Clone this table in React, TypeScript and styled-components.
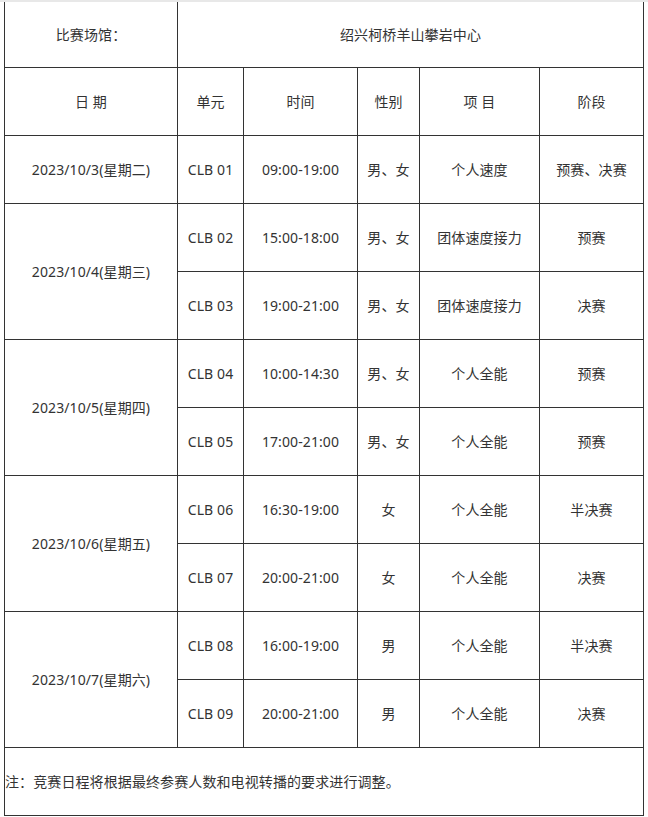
import React from "react";
import styled, { createGlobalStyle } from "styled-components";

const GlobalStyle = createGlobalStyle`
  html, body { margin: 0; padding: 0; background: #fff; }
  body { font-family: "Noto Sans", "Noto Sans CJK SC", sans-serif; color: #333; }
`;

const Page = styled.div`
  padding: 0 4px;
`;

const TopRule = styled.div`
  height: 2px;
  margin: 0 -4px;
  background: #e8e8e8;
`;

const Table = styled.table`
  width: 639px;
  table-layout: fixed;
  border-collapse: collapse;
  font-size: 14px;
  font-family: "Noto Sans", "Noto Sans CJK SC", sans-serif;
  color: #333;
`;

const Row = styled.tr<{ $h: number }>`
  height: ${(p) => p.$h}px;
`;

const Cell = styled.td<{ $align?: string; $noTop?: boolean }>`
  border: 1px solid #333;
  ${(p) => (p.$noTop ? "border-top: none;" : "")}
  padding: 1px 0 0;
  text-align: ${(p) => p.$align || "center"};
  vertical-align: middle;
  white-space: nowrap;
  line-height: 20px;
  letter-spacing: 0.1px;
`;

type Item = { unit: string; time: string; sex: string; event: string; stage: string };
type Day = { date: string; items: Item[] };

const days: Day[] = [
  { date: "2023/10/3(星期二)", items: [{ unit: "CLB 01", time: "09:00-19:00", sex: "男、女", event: "个人速度", stage: "预赛、决赛" }] },
  {
    date: "2023/10/4(星期三)",
    items: [
      { unit: "CLB 02", time: "15:00-18:00", sex: "男、女", event: "团体速度接力", stage: "预赛" },
      { unit: "CLB 03", time: "19:00-21:00", sex: "男、女", event: "团体速度接力", stage: "决赛" },
    ],
  },
  {
    date: "2023/10/5(星期四)",
    items: [
      { unit: "CLB 04", time: "10:00-14:30", sex: "男、女", event: "个人全能", stage: "预赛" },
      { unit: "CLB 05", time: "17:00-21:00", sex: "男、女", event: "个人全能", stage: "预赛" },
    ],
  },
  {
    date: "2023/10/6(星期五)",
    items: [
      { unit: "CLB 06", time: "16:30-19:00", sex: "女", event: "个人全能", stage: "半决赛" },
      { unit: "CLB 07", time: "20:00-21:00", sex: "女", event: "个人全能", stage: "决赛" },
    ],
  },
  {
    date: "2023/10/7(星期六)",
    items: [
      { unit: "CLB 08", time: "16:00-19:00", sex: "男", event: "个人全能", stage: "半决赛" },
      { unit: "CLB 09", time: "20:00-21:00", sex: "男", event: "个人全能", stage: "决赛" },
    ],
  },
];

export default function App() {
  return (
    <Page>
      <GlobalStyle />
      <TopRule />
      <Table>
        <colgroup>
          <col style={{ width: 173 }} />
          <col style={{ width: 66 }} />
          <col style={{ width: 114 }} />
          <col style={{ width: 62 }} />
          <col style={{ width: 120 }} />
          <col style={{ width: 104 }} />
        </colgroup>
        <tbody>
          <Row $h={65}>
            <Cell $noTop>比赛场馆：</Cell>
            <Cell $noTop colSpan={5}>绍兴柯桥羊山攀岩中心</Cell>
          </Row>
          <Row $h={68}>
            <Cell>日 期</Cell>
            <Cell>单元</Cell>
            <Cell>时间</Cell>
            <Cell>性别</Cell>
            <Cell>项 目</Cell>
            <Cell>阶段</Cell>
          </Row>
          {days.map((d) =>
            d.items.map((it, i) => (
              <Row $h={68} key={it.unit}>
                {i === 0 && <Cell rowSpan={d.items.length}>{d.date}</Cell>}
                <Cell>{it.unit}</Cell>
                <Cell>{it.time}</Cell>
                <Cell>{it.sex}</Cell>
                <Cell>{it.event}</Cell>
                <Cell>{it.stage}</Cell>
              </Row>
            ))
          )}
          <Row $h={68}>
            <Cell colSpan={6} $align="left">注：竞赛日程将根据最终参赛人数和电视转播的要求进行调整。</Cell>
          </Row>
        </tbody>
      </Table>
    </Page>
  );
}
